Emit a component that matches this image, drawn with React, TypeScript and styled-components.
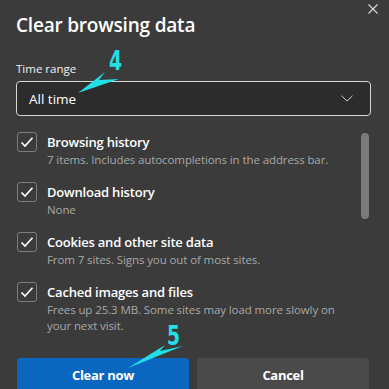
import React from 'react';
import styled, { createGlobalStyle } from 'styled-components';

const GlobalStyle = createGlobalStyle`
  html, body { margin: 0; padding: 0; background: #3b3b3b; }
  body { font-family: "Open Sans", "Noto Sans", sans-serif; color: #fff; }
  * { box-sizing: border-box; }
`;

interface DataItem {
  title: string;
  detail: string;
}

const items: DataItem[] = [
  { title: 'Browsing history', detail: '7 items. Includes autocompletions in the address bar.' },
  { title: 'Download history', detail: 'None' },
  { title: 'Cookies and other site data', detail: 'From 7 sites. Signs you out of most sites.' },
  { title: 'Cached images and files', detail: 'Frees up 25.3 MB. Some sites may load more slowly on your next visit.' },
];

const Dialog = styled.div`
  position: relative;
  width: 389px;
  height: 389px;
  overflow: hidden;
  background: #3b3b3b;
  padding: 12px 18px 0 16px;
  display: flex;
  flex-direction: column;
`;

const CloseButton = styled.button`
  position: absolute;
  top: 3px;
  right: 10px;
  width: 12px;
  height: 12px;
  padding: 0;
  border: none;
  background: transparent;
  display: flex;
`;

const Title = styled.h1`
  margin: 0;
  font-size: 19px;
  font-weight: 600;
  line-height: 26px;
  letter-spacing: -0.2px;
`;

const Label = styled.div`
  margin-top: 23px;
  font-size: 11.5px;
  line-height: 16px;
  color: #f2f2f2;
`;

const Select = styled.div`
  margin-top: 4px;
  height: 35px;
  width: 355px;
  border: 1px solid #d6d6d6;
  border-radius: 4px;
  background: #2c2c2c;
  display: flex;
  align-items: center;
  justify-content: space-between;
  padding: 0 17px 0 12px;
  font-size: 13.5px;
`;

const ListArea = styled.div`
  margin-top: 16px;
  display: flex;
  gap: 8px;
`;

const List = styled.div`
  flex: 1;
  display: flex;
  flex-direction: column;
`;

const ScrollTrack = styled.div`
  width: 8px;
  padding-top: 1px;
  margin-right: 2px;
`;

const ScrollThumb = styled.div`
  width: 8px;
  height: 86px;
  border-radius: 4px;
  background: #7a7a7a;
`;

const Row = styled.div`
  display: flex;
  gap: 10px;
  min-height: 50px;
`;

const Box = styled.div`
  flex: none;
  width: 20px;
  height: 20px;
  margin-left: 1px;
  border: 1px solid #7c7c7c;
  border-radius: 3px;
  display: flex;
  align-items: center;
  justify-content: center;
`;

const RowText = styled.div`
  display: flex;
  flex-direction: column;
`;

const RowTitle = styled.div`
  font-size: 13px;
  font-weight: 600;
  line-height: 20px;
  letter-spacing: -0.2px;
`;

const RowDetail = styled.div`
  font-size: 11.5px;
  line-height: 16px;
  color: #a8a8a8;
  letter-spacing: -0.1px;
`;

const Buttons = styled.div`
  margin-top: auto;
  display: grid;
  grid-template-columns: 172px 172px;
  gap: 8px;
  padding-left: 1px;
`;

const Button = styled.button<{ $primary?: boolean }>`
  height: 34px;
  margin-bottom: -3px;
  border: none;
  border-radius: 3px 3px 0 0;
  background: ${p => (p.$primary ? '#0a66bf' : '#4a4a4a')};
  color: #fff;
  font-family: inherit;
  font-size: 13px;
  font-weight: 700;
  letter-spacing: -0.3px;
`;

const Marker = styled.svg`
  position: absolute;
  pointer-events: none;
`;

const MarkerNumber = styled.span<{ $x: number; $y: number }>`
  position: absolute;
  left: ${p => p.$x}px;
  top: ${p => p.$y}px;
  font-family: "Liberation Sans Narrow", "DejaVu Sans Condensed", sans-serif;
  font-weight: 700;
  font-size: 26px;
  line-height: 26px;
  color: #22dfe6;
  transform: scaleX(0.8);
  transform-origin: left top;
`;

const Check = () => (
  <svg width="14" height="12" viewBox="0 0 14 12">
    <path d="M1.5 6.5 L5 10 L12.5 1.8" fill="none" stroke="#fff" strokeWidth="1.7" />
  </svg>
);

const App: React.FC = () => (
  <>
    <GlobalStyle />
    <Dialog>
      <CloseButton aria-label="Close">
        <svg width="12" height="12" viewBox="0 0 12 12">
          <path d="M1.5 1.5 L10.5 10.5 M10.5 1.5 L1.5 10.5" stroke="#dcdcdc" strokeWidth="1.1" />
        </svg>
      </CloseButton>
      <Title>Clear browsing data</Title>
      <Label>Time range</Label>
      <Select>
        <span>All time</span>
        <svg width="12" height="7" viewBox="0 0 12 7">
          <path d="M0.5 0.8 L6 6 L11.5 0.8" fill="none" stroke="#cfcfcf" strokeWidth="1" />
        </svg>
      </Select>
      <ListArea>
        <List>
          {items.map(item => (
            <Row key={item.title}>
              <Box>
                <Check />
              </Box>
              <RowText>
                <RowTitle>{item.title}</RowTitle>
                <RowDetail>{item.detail}</RowDetail>
              </RowText>
            </Row>
          ))}
        </List>
        <ScrollTrack>
          <ScrollThumb />
        </ScrollTrack>
      </ListArea>
      <Buttons>
        <Button $primary>Clear now</Button>
        <Button>Cancel</Button>
      </Buttons>

      <MarkerNumber $x={109} $y={48}>4</MarkerNumber>
      <Marker width="389" height="389" style={{ left: 0, top: 0 }}>
        <polygon points="78,93 105,72 99,80 119,79" fill="#22dfe6" />
        <polygon points="128,368 165,345 160,351 183,346" fill="#22dfe6" />
      </Marker>
      <MarkerNumber $x={167} $y={323}>5</MarkerNumber>
    </Dialog>
  </>
);

export default App;
